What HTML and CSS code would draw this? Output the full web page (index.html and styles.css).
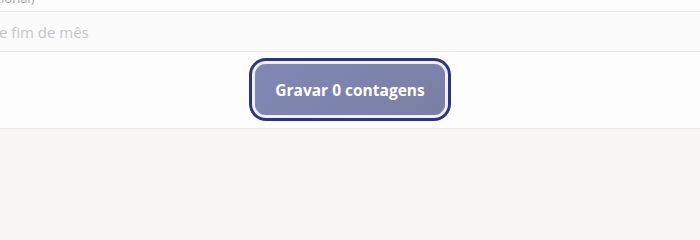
FILE: index.html
```html
<!DOCTYPE html>
<html lang="pt">
<head>
    <meta charset="UTF-8">
    <meta name="viewport" content="width=device-width, initial-scale=1.0">
    <title>Gravar contagens</title>
    <link rel="stylesheet" href="styles.css">
</head>
<body>
    <div class="panel">
        <div class="field">
            <label class="field-label" for="nota">Observação (opcional)</label>
            <input type="text" id="nota" class="field-input" placeholder="Contagem de fim de mês">
        </div>

        <div class="actions">
            <button class="save-btn" type="button">Gravar 0 contagens</button>
        </div>
    </div>
</body>
</html>
```

FILE: styles.css
```css
* {
    margin: 0;
    padding: 0;
    box-sizing: border-box;
}

body {
    font-family: 'Open Sans', Lato, sans-serif;
    background: #f8f7f5;
    min-height: 100vh;
    overflow: hidden;
}

.panel {
    margin-top: -9px;
    background: #fdfdfd;
    border-bottom: 1px solid #e8e8e8;
}

.field {
    display: flex;
    flex-direction: column;
    margin-left: -86px;
}

.field-label {
    display: block;
    font-size: 13px;
    line-height: 14px;
    color: #a4a4ab;
    margin-left: -14px;
    padding-bottom: 6px;
}

.field-input {
    height: 41px;
    border: none;
    border-top: 1px solid #e8e8e8;
    border-bottom: 1px solid #e8e8e8;
    background: #fbfbfb;
    font-family: inherit;
    font-size: 15px;
    color: #333;
    outline: none;
}

.field-input::placeholder {
    color: #c6c6ca;
}

.actions {
    display: flex;
    justify-content: center;
    padding: 12px 0 13px;
}

.save-btn {
    width: 190px;
    height: 51px;
    border: none;
    border-radius: 11px;
    background: linear-gradient(135deg, #8088b4 0%, #7a7fa4 100%);
    color: white;
    font-family: inherit;
    font-size: 15.5px;
    font-weight: 700;
    cursor: pointer;
    box-shadow: 0 0 0 3px #efeff5, 0 0 0 6px #2b3580;
}
```
